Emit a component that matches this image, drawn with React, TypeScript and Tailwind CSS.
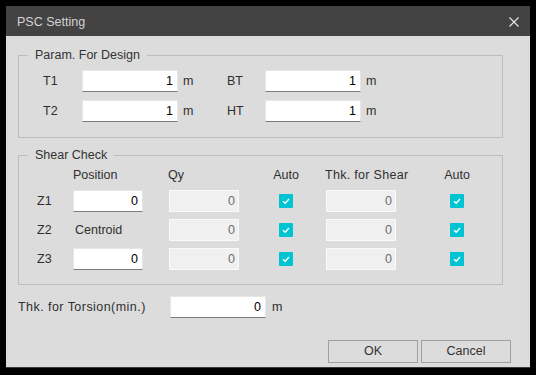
import React from 'react';

const Field = ({ value, w = 'w-[96px]' }: { value: string; w?: string }) => (
  <div
    className={`${w} h-[22px] bg-white border border-[#e6e6e6] border-b-[#7a7a7a] flex items-center justify-end pr-[4px] text-black`}
  >
    {value}
  </div>
);

const Disabled = ({ value }: { value: string }) => (
  <div className="w-[70px] h-[22px] bg-[#f0f0f0] border border-[#fafafa] flex items-center justify-end pr-[3px] text-[#6d6d6d]">
    {value}
  </div>
);

const Check = () => (
  <div className="w-[14px] h-[14px] bg-[#00c4d1] rounded-[1px] flex items-center justify-center">
    <svg width="10" height="10" viewBox="0 0 10 10">
      <path d="M2 5.2 L4.2 7.2 L8 3" fill="none" stroke="white" strokeWidth="1.4" />
    </svg>
  </div>
);

const Group = ({ title, h, children }: { title: string; h: string; children: React.ReactNode }) => (
  <div className={`relative w-[485px] ${h} border border-[#bdbdbd]`}>
    <span className="absolute left-[9px] -top-[8px] px-[7px] bg-[#dcdcdc] leading-[14px] text-[#333]">
      {title}
    </span>
    {children}
  </div>
);

export default function App() {
  const design = [
    { a: 'T1', b: 'BT' },
    { a: 'T2', b: 'HT' },
  ];
  const zones = [
    { z: 'Z1', pos: '0' },
    { z: 'Z2', pos: null },
    { z: 'Z3', pos: '0' },
  ];

  return (
    <div className="w-[536px] h-[375px] bg-black pt-[6px] pl-[6px] font-['Liberation_Sans',Arial,sans-serif] text-[12.5px]">
      <div className="w-[524px] h-[362px] bg-[#dcdcdc] flex flex-col border-b border-[#3a3a3a]">
        {/* Title bar */}
        <div className="h-[30px] bg-[#434343] flex items-center justify-between pl-[11px] pr-[11px] pt-[2px]">
          <span className="text-[#d4d4d4] text-[12.5px]">PSC Setting</span>
          <svg width="10" height="10" viewBox="0 0 10 10">
            <path d="M0.5 0.5 L9.5 9.5 M9.5 0.5 L0.5 9.5" stroke="#e8e8e8" strokeWidth="1.1" />
          </svg>
        </div>

        <div className="pl-[12px] pt-[19px] text-[#2f2f2f]">
          {/* Param. For Design */}
          <Group title="Param. For Design" h="h-[83px]">
            <div className="pt-[14px] flex flex-col gap-[8px]">
              {design.map((r) => (
                <div key={r.a} className="flex items-center h-[22px] pl-[24px]">
                  <span className="w-[39px]">{r.a}</span>
                  <Field value="1" />
                  <span className="ml-[5px] w-[44px]">m</span>
                  <span className="w-[38px]">{r.b}</span>
                  <Field value="1" />
                  <span className="ml-[5px]">m</span>
                </div>
              ))}
            </div>
          </Group>

          {/* Shear Check */}
          <div className="mt-[17px]">
            <Group title="Shear Check" h="h-[130px]">
              <div className="pt-[11px] flex flex-col gap-[7px]">
                <div className="flex items-center h-[16px] pl-[18px]">
                  <span className="w-[36px]" />
                  <span className="w-[70px]">Position</span>
                  <span className="ml-[25px] w-[71px]">Qy</span>
                  <div className="ml-[40px] w-[14px] flex justify-center whitespace-nowrap">Auto</div>
                  <span className="ml-[32px] w-[71px] whitespace-nowrap tracking-[0.3px]">Thk. for Shear</span>
                  <div className="ml-[54px] w-[14px] flex justify-center whitespace-nowrap">Auto</div>
                </div>
                {zones.map((r) => (
                  <div key={r.z} className="flex items-center h-[22px] pl-[18px]">
                    <span className="w-[36px]">{r.z}</span>
                    {r.pos !== null ? (
                      <Field value={r.pos} w="w-[70px]" />
                    ) : (
                      <span className="w-[70px] pl-[2px]">Centroid</span>
                    )}
                    <div className="ml-[26px]">
                      <Disabled value="0" />
                    </div>
                    <div className="ml-[40px]">
                      <Check />
                    </div>
                    <div className="ml-[33px]">
                      <Disabled value="0" />
                    </div>
                    <div className="ml-[54px]">
                      <Check />
                    </div>
                  </div>
                ))}
              </div>
            </Group>
          </div>

          {/* Torsion */}
          <div className="mt-[11px] flex items-center h-[22px]">
            <span className="w-[152px] whitespace-nowrap tracking-[0.45px]">Thk. for Torsion(min.)</span>
            <Field value="0" />
            <span className="ml-[6px]">m</span>
          </div>

          {/* Buttons */}
          <div className="mt-[22px] ml-[310px] flex gap-[3px]">
            <button className="w-[90px] h-[23px] border border-[#a0a0a0] bg-[#dcdcdc] text-[#333]">OK</button>
            <button className="w-[90px] h-[23px] border border-[#a0a0a0] bg-[#dcdcdc] text-[#333]">Cancel</button>
          </div>
        </div>
      </div>
    </div>
  );
}
